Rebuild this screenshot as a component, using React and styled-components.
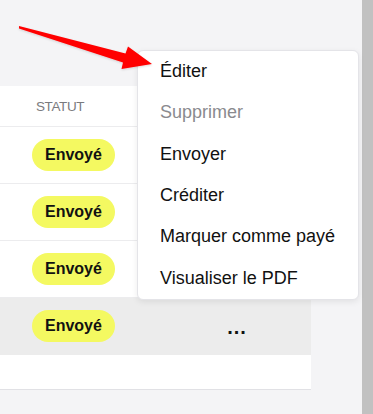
import React from 'react';
import styled, { createGlobalStyle } from 'styled-components';

const GlobalStyle = createGlobalStyle`
    html, body {
        margin: 0;
        padding: 0;
        background: #f4f4f6;
        font-family: "Liberation Sans", Arial, sans-serif;
    }
`;

const rows = [
    { id: 1, status: 'Envoyé' },
    { id: 2, status: 'Envoyé' },
    { id: 3, status: 'Envoyé' },
    { id: 4, status: 'Envoyé', active: true },
];

const menuItems = [
    { label: 'Éditer' },
    { label: 'Supprimer', disabled: true },
    { label: 'Envoyer' },
    { label: 'Créditer' },
    { label: 'Marquer comme payé' },
    { label: 'Visualiser le PDF' },
];

function App() {
    return (
        <>
            <GlobalStyle />
            <Page>
                <Main>
                    <Card>
                        <HeaderRow>
                            <HeaderCell>Statut</HeaderCell>
                            <HeaderCell />
                        </HeaderRow>
                        {rows.map(row => (
                            <Row key={row.id} active={row.active}>
                                <Cell>
                                    <Badge>{row.status}</Badge>
                                </Cell>
                                <ActionCell>{row.active ? '...' : ''}</ActionCell>
                            </Row>
                        ))}
                        <Filler />
                    </Card>

                    <Menu>
                        {menuItems.map(item => (
                            <MenuItem key={item.label} disabled={item.disabled}>
                                {item.label}
                            </MenuItem>
                        ))}
                    </Menu>

                    <Arrow viewBox="0 0 362 414" width="362" height="414">
                        <defs>
                            <filter id="soft" x="-10%" y="-10%" width="120%" height="120%">
                                <feDropShadow dx="0" dy="1" stdDeviation="1" floodColor="#000" floodOpacity="0.15" />
                            </filter>
                        </defs>
                        <polygon
                            points="19,26 125.5,53.5 128,46.5 152,64 121.5,69 123,62.5 19,28.5"
                            fill="#ff0000"
                            filter="url(#soft)"
                        />
                    </Arrow>
                </Main>
                <Scrollbar />
            </Page>
        </>
    );
}

export default App;

const Page = styled.div`
    display: flex;
    width: 373px;
    height: 414px;
    overflow: hidden;
`;

const Main = styled.div`
    position: relative;
    flex: 1;
    padding-top: 86px;
`;

const Scrollbar = styled.div`
    width: 11px;
    background: #c1c1c1;
`;

const Card = styled.div`
    width: 311px;
    background: #ffffff;
    border-bottom: 1px solid #e1e1e5;
`;

const HeaderRow = styled.div`
    display: grid;
    grid-template-columns: 150px 110px 1fr;
    padding-left: 32px;
    height: 40px;
    align-items: center;
    border-bottom: 1px solid #ececee;
`;

const HeaderCell = styled.div`
    padding-left: 4px;
    font-size: 13.5px;
    color: #7a7a7e;
    text-transform: uppercase;
    letter-spacing: -0.4px;
`;

const Row = styled.div`
    display: grid;
    grid-template-columns: 150px 110px 1fr;
    padding-left: 32px;
    height: 56px;
    align-items: center;
    background: ${props => props.active ? '#ececec' : '#ffffff'};
    border-bottom: 1px solid ${props => props.active ? '#ececec' : '#ececee'};
`;

const Cell = styled.div`
    display: flex;
    align-items: center;
`;

const Badge = styled.span`
    display: inline-flex;
    align-items: center;
    justify-content: center;
    height: 32px;
    padding: 0 13px;
    border-radius: 16px;
    background: #f4f961;
    color: #111;
    font-size: 16px;
    font-weight: 700;
`;

const ActionCell = styled.div`
    text-align: center;
    font-size: 20px;
    font-weight: 700;
    color: #111;
    letter-spacing: 1px;
    padding-top: 2px;
`;

const Filler = styled.div`
    height: 34px;
`;

const Menu = styled.div`
    position: absolute;
    top: 50px;
    left: 137px;
    width: 220px;
    background: #ffffff;
    border: 1px solid #e4e4e8;
    border-radius: 6px;
    box-shadow: 0 2px 6px rgba(0, 0, 0, 0.08);
    z-index: 2;
`;

const MenuItem = styled.div`
    height: 41.33px;
    display: flex;
    align-items: center;
    padding-left: 22px;
    font-size: 18px;
    color: ${props => props.disabled ? '#8a8a8e' : '#111111'};
    cursor: ${props => props.disabled ? 'default' : 'pointer'};
`;

const Arrow = styled.svg`
    position: absolute;
    top: 0;
    left: 0;
    z-index: 3;
    pointer-events: none;
`;
